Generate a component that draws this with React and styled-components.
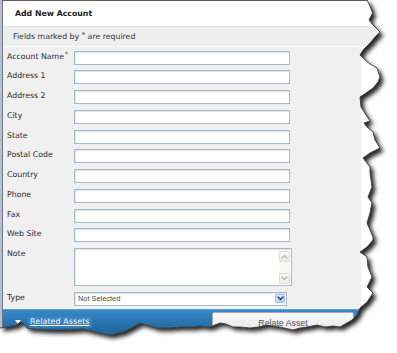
import React from "react";
import styled, { createGlobalStyle } from "styled-components";

const Global = createGlobalStyle`
  html, body { margin: 0; padding: 0; background: #ffffff; }
  body { font-family: "DejaVu Sans", Verdana, sans-serif; }
  * { box-sizing: border-box; }
`;

const Page = styled.div`
  position: relative;
  width: 397px;
  height: 353px;
  overflow: hidden;
  background: #ffffff;
`;

const Panel = styled.div`
  margin-left: 2px;
  width: 392px;
  border-top: 1px solid #5c5c5c;
  border-left: 1px solid #6f7786;
  box-shadow: -2px 0 0 #b9c0cc;
  display: flex;
  flex-direction: column;
`;

const Header = styled.div`
  height: 25px;
  line-height: 25px;
  padding-left: 12px;
  background: #ffffff;
  font-size: 7.8px;
  font-weight: bold;
  color: #1b1b1b;
`;

const Notice = styled.div`
  height: 20px;
  line-height: 20px;
  padding-left: 10px;
  background: #eeeeee;
  border-top: 1px solid #e2e2e2;
  font-size: 7.8px;
  color: #333333;
`;

const Star = styled.span`
  position: relative;
  top: -2px;
  font-size: 7px;
`;

const Body = styled.div`
  display: flex;
`;

const Form = styled.div`
  width: 358px;
  background: #f0f0f0;
  border-top: 1px solid #f9f9f9;
  display: grid;
  grid-template-columns: 67px auto;
  row-gap: 5.75px;
  align-items: start;
  padding: 3.5px 0 3.25px 4px;
`;

const Gutter = styled.div`
  flex: 1;
  background: #ffffff;
`;

const Label = styled.div`
  font-size: 7.8px;
  line-height: 12px;
  color: #2b2b2b;
  white-space: nowrap;
`;

const Sup = styled.sup`
  font-size: 6px;
  line-height: 0;
  vertical-align: 3px;
  margin-left: 1px;
  color: #222;
`;

const fieldBorder = `
  border: 1px solid #a6b9cd;
  box-shadow: inset 1px 1px 0 #dfe6ee;
  background: #ffffff;
`;

const TextInput = styled.input`
  display: block;
  width: 216px;
  height: 14px;
  margin: 0;
  padding: 0 2px;
  font-size: 8px;
  outline: none;
  ${fieldBorder}
`;

const NoteBox = styled.div`
  width: 218px;
  height: 38px;
  display: flex;
  padding: 1px;
  ${fieldBorder}
`;

const NoteArea = styled.textarea`
  flex: 1;
  border: none;
  resize: none;
  outline: none;
  background: transparent;
  margin: 0;
  padding: 1px 2px;
  font-size: 8px;
  font-family: inherit;
`;

const ScrollBar = styled.div`
  width: 11px;
  display: flex;
  flex-direction: column;
  justify-content: space-between;
  background: #f9f9f4;
  padding: 0.5px 0;
`;

const ScrollBtn = styled.div`
  height: 11px;
  border: 1px solid #dcdcd2;
  border-radius: 2px;
  background: linear-gradient(#fbfbf7, #ededE4);
  display: flex;
  align-items: center;
  justify-content: center;
`;

const SelectBox = styled.div`
  width: 213px;
  height: 14px;
  display: flex;
  align-items: center;
  justify-content: space-between;
  padding: 0 1px 0 3px;
  ${fieldBorder}
`;

const SelectText = styled.span`
  font-family: "Liberation Sans", Arial, sans-serif;
  font-size: 7.4px;
  color: #4a4a4a;
`;

const DropBtn = styled.div`
  width: 10px;
  height: 9px;
  border: 1px solid #a9bde6;
  border-radius: 1px;
  background: linear-gradient(#dbe6fb, #b9cdf3);
  display: flex;
  align-items: center;
  justify-content: center;
`;

const Footer = styled.div`
  height: 32px;
  display: flex;
  align-items: flex-start;
  padding: 1.5px 40px 0 12px;
  background: linear-gradient(#3789c8 0%, #2874b0 40%, #1b5d92 100%);
  border-top: 1px solid #5aa0d4;
`;

const Toggle = styled.div`
  display: flex;
  align-items: center;
  gap: 7px;
  margin-top: 5px;
`;

const Caret = styled.span`
  width: 0;
  height: 0;
  border-left: 3px solid transparent;
  border-right: 3px solid transparent;
  border-top: 4px solid #ffffff;
`;

const RelatedLink = styled.a`
  display: block;
  height: 11px;
  line-height: 10px;
  padding: 0 2px;
  font-size: 7.9px;
  color: #f2f7ff;
  text-decoration: underline;
  background: rgba(255, 255, 255, 0.09);
  letter-spacing: 0.1px;
`;

const RelateButton = styled.div`
  margin-left: auto;
  width: 142px;
  height: 24px;
  line-height: 20px;
  text-align: center;
  border: 1px solid #a7a7ad;
  border-radius: 2px;
  background: linear-gradient(#f7f7f8, #e6e6ea);
  font-family: "Liberation Sans", Arial, sans-serif;
  font-size: 8.8px;
  color: #555555;
`;

const Overlay = styled.svg`
  position: absolute;
  left: 0;
  top: 0;
  pointer-events: none;
`;

const EDGE = [
  [367, 0], [370, 6], [372.5, 13], [369, 20], [373, 25], [380, 32], [375, 37],
  [370, 43], [363, 50], [360, 55], [364, 59], [370, 64], [377, 68], [380, 77],
  [378, 82], [373, 88], [366, 93], [360, 97], [361, 107], [366, 115], [370, 121],
  [364, 123], [367, 127], [373, 132], [375, 140], [380, 148], [370, 153],
  [363, 158], [370, 167], [370, 173], [372, 187], [368, 197], [372, 203],
  [370, 213], [367, 223], [370, 230], [373, 237], [373, 240], [367, 247],
  [360, 252], [367, 257], [368, 267], [372, 277], [367, 287], [373, 293],
  [367, 302], [360, 308], [357, 315], [352, 320], [345, 324], [340, 327],
  [333, 326], [325, 327], [317, 325], [307, 327], [300, 328], [293, 330],
  [280, 327], [272, 326], [267, 325], [258, 327], [250, 328], [240, 327],
  [233, 327], [226, 324], [220, 323], [210, 327], [200, 326], [193, 327],
  [180, 327], [167, 328], [157, 328], [147, 325], [140, 323], [133, 327],
  [123, 332], [110, 335], [100, 333], [83, 329], [67, 330], [50, 330],
  [33, 329], [27, 328], [23, 323], [20, 322], [17, 325], [7, 327], [0, 328],
];

const edgeD = "M" + EDGE.map((p) => p.join(",")).join(" L");
const paperD = "M0,0 L" + EDGE.map((p) => p.join(",")).join(" L") + " Z";
const outsideD = "M-20,-20 H420 V380 H-20 Z " + paperD;

function TornEdge() {
  return (
    <Overlay width="397" height="353" viewBox="0 0 397 353">
      <defs>
        <filter id="tearBlur" x="-10%" y="-10%" width="120%" height="120%">
          <feGaussianBlur stdDeviation="2" />
        </filter>
        <clipPath id="tearOut">
          <path d={outsideD} clipRule="evenodd" />
        </clipPath>
      </defs>
      <path d={outsideD} fill="#ffffff" fillRule="evenodd" />
      <g clipPath="url(#tearOut)">
        <path d={paperD} transform="translate(3.5,3.5)" fill="#262626" filter="url(#tearBlur)" />
      </g>
      <path d={edgeD} fill="none" stroke="#3d3d3d" strokeWidth="0.9" />
    </Overlay>
  );
}

function Chevron({ up, color, width = 1.3 }) {
  return (
    <svg width="7" height="5" viewBox="0 0 7 5">
      <path
        d={up ? "M1,4 L3.5,1.5 L6,4" : "M1,1 L3.5,3.5 L6,1"}
        fill="none"
        stroke={color}
        strokeWidth={width}
        strokeLinecap="round"
        strokeLinejoin="round"
      />
    </svg>
  );
}

const FIELDS = [
  "Address 1",
  "Address 2",
  "City",
  "State",
  "Postal Code",
  "Country",
  "Phone",
  "Fax",
  "Web Site",
];

export default function App() {
  return (
    <Page>
      <Global />
      <Panel>
        <Header>Add New Account</Header>
        <Notice>
          Fields marked by <Star>*</Star> are required
        </Notice>
        <Body>
          <Form>
            <Label>
              Account Name<Sup>*</Sup>
            </Label>
            <TextInput type="text" />
            {FIELDS.map((f) => (
              <React.Fragment key={f}>
                <Label>{f}</Label>
                <TextInput type="text" />
              </React.Fragment>
            ))}
            <Label>Note</Label>
            <NoteBox>
              <NoteArea />
              <ScrollBar>
                <ScrollBtn>
                  <Chevron up color="#b9b9b2" />
                </ScrollBtn>
                <ScrollBtn>
                  <Chevron color="#b9b9b2" />
                </ScrollBtn>
              </ScrollBar>
            </NoteBox>
            <Label>Type</Label>
            <SelectBox>
              <SelectText>Not Selected</SelectText>
              <DropBtn>
                <Chevron color="#27469a" width={1.5} />
              </DropBtn>
            </SelectBox>
          </Form>
          <Gutter />
        </Body>
        <Footer>
          <Toggle>
            <Caret />
            <RelatedLink>Related Assets</RelatedLink>
          </Toggle>
          <RelateButton>Relate Asset</RelateButton>
        </Footer>
      </Panel>
      <TornEdge />
    </Page>
  );
}
